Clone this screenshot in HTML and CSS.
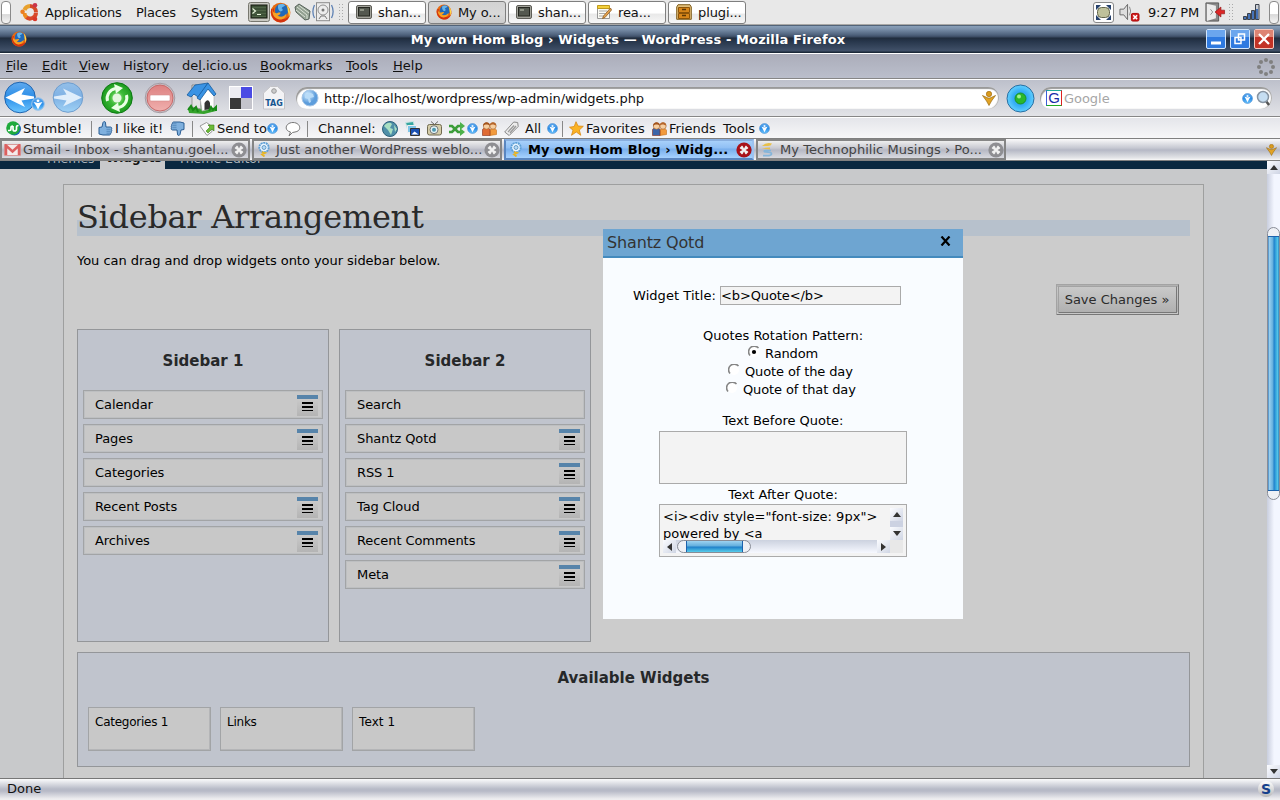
FILE: index.html
```html
<!DOCTYPE html>
<html lang="en">
<head>
<meta charset="utf-8">
<title>My own Hom Blog › Widgets — WordPress</title>
<link rel="stylesheet" href="styles.css">
</head>
<body>
<svg class="defs" width="0" height="0" aria-hidden="true">
  <defs>
    <linearGradient id="gBlue" x1="0" y1="0" x2="0" y2="1"><stop offset="0" stop-color="#5fa9ee"/><stop offset=".5" stop-color="#2b8ee8"/><stop offset="1" stop-color="#6cc6ff"/></linearGradient>
    <linearGradient id="gPale" x1="0" y1="0" x2="0" y2="1"><stop offset="0" stop-color="#93bfe9"/><stop offset=".5" stop-color="#7fb1e4"/><stop offset="1" stop-color="#9fd2f6"/></linearGradient>
    <radialGradient id="gGreen"><stop offset="0" stop-color="#b6efa6"/><stop offset=".45" stop-color="#3dbb38"/><stop offset="1" stop-color="#1c9a1e"/></radialGradient>
    <linearGradient id="gRed" x1="0" y1="0" x2="0" y2="1"><stop offset="0" stop-color="#dd8080"/><stop offset="1" stop-color="#f0b0ae"/></linearGradient>
    <radialGradient id="gCyan"><stop offset="0" stop-color="#2aa0ee"/><stop offset=".55" stop-color="#35aef6"/><stop offset="1" stop-color="#62d0ff"/></radialGradient>
    <radialGradient id="gGlobe" cx=".35" cy=".3"><stop offset="0" stop-color="#d9efff"/><stop offset="1" stop-color="#5d9ddc"/></radialGradient>
    <linearGradient id="gSilver" x1="0" y1="0" x2="0" y2="1"><stop offset="0" stop-color="#fdfdfd"/><stop offset="1" stop-color="#b9b9b9"/></linearGradient>

    <symbol id="firefox" viewBox="0 0 20 20">
      <circle cx="10" cy="10" r="9.4" fill="#e66a10"/>
      <path d="M1 7C0 13 4 19.5 10 19.5c5 0 9-4 9.400-9C18 15 14 17 10 16 5 15 3 11 4 6z" fill="#d3330f"/>
      <circle cx="11" cy="8" r="6.300" fill="#2269b8"/>
      <path d="M8 2.500c2-1 5-1 6.500.5C13 5 12 4 11 6c2 1 1 3-1 3-2-1-3-4-2-6.500z" fill="#67b5ea"/>
      <path d="M3 4C2 8 3 10 5 10.500c2 .5 3-1 5-.5 0 2-2 3-3 3 3 2 7 1 8.500-2C16 15 12 17.500 8 16.500 3 15 1 10 3 4z" fill="#f7a323"/>
      <path d="M16 3c3 3 4 8 2 12 0-3-.5-5-1-6 0-2-.5-4-1-6z" fill="#ffd94a"/>
    </symbol>
    <symbol id="terminal" viewBox="0 0 22 20">
      <rect x=".5" y=".5" width="21" height="19" rx="2" fill="#c9c9c2" stroke="#77776f"/>
      <rect x="3" y="3" width="16" height="13" fill="#3c5036" stroke="#15190f"/>
      <path d="M4 5.500h14M4 8.500h14M4 11.500h14M4 14.500h14" stroke="#4f6447"/>
      <path d="M4.500 6.500L7.500 9l-3 2.500M9 12.500h4" stroke="#e9f5dd" fill="none" stroke-width="1.200"/>
    </symbol>
    <symbol id="monitor" viewBox="0 0 16 14">
      <rect x=".5" y=".5" width="15" height="13" rx="1.500" fill="#a3a39b" stroke="#5e5e58"/>
      <rect x="2.500" y="2.500" width="11" height="8.500" fill="#54584f" stroke="#24261f"/>
      <path d="M4 5h4" stroke="#c8cdbd"/>
    </symbol>
    <symbol id="drop" viewBox="0 0 12 12">
      <circle cx="6" cy="6" r="5.400" fill="url(#gBlue)" stroke="#4c8fd2" stroke-width=".7"/>
      <path d="M6 10.200L4.300 6.800 2.800 4.200 6 5l3.200-.8-1.500 2.600z" fill="#fff"/><circle cx="6" cy="3.300" r="1.200" fill="#e6f4ff"/>
    </symbol>
    <symbol id="people" viewBox="0 0 15 15">
      <path d="M8 14.500V9.500c0-2.500 6.500-2.500 6.500 0v4z" fill="#f29a3c" stroke="#c56d18" stroke-width=".6"/>
      <path d="M.5 14.500V9c0-3 7.500-3 7.500 0v5.500z" fill="currentColor" stroke="#8b2d15" stroke-width=".6"/>
      <circle cx="11" cy="5" r="3.200" fill="#f6cfa2" stroke="#a05a22" stroke-width=".6"/>
      <path d="M7.800 4.500C8 0 14 0 14.300 4.500 12 4 11 2.500 7.800 4.500z" fill="#b5662a"/>
      <circle cx="4.500" cy="5" r="3.200" fill="#f6cfa2" stroke="#a05a22" stroke-width=".6"/>
      <path d="M1 5C1 .5 7.500 0 8 4.500 6 4 4 2.500 1 5z" fill="#a3541f"/>
    </symbol>
    <symbol id="closer" viewBox="0 0 16 16">
      <circle cx="8" cy="8" r="7.600" fill="currentColor"/>
      <path d="M4.800 4.800l6.400 6.400M11.200 4.800l-6.400 6.400" stroke="#f1f1f1" stroke-width="3.400"/>
      <path d="M8 3.500v9M3.500 8h9" stroke="currentColor" stroke-width="1"/>
      <circle cx="8" cy="8" r="2" fill="#f1f1f1"/>
    </symbol>
    <symbol id="kite" viewBox="0 0 14 15">
      <circle cx="7" cy="3" r="2.700" fill="#d99a1c" stroke="#99640a" stroke-width=".6"/>
      <path d="M.5 4.500L6 7h2l5.500-2.500L9.500 10 7 14.500 4.500 10z" fill="#e2a325" stroke="#996b12" stroke-width=".7"/>
    </symbol>
    <symbol id="bulb" viewBox="0 0 13 15">
      <circle cx="7" cy="5.500" r="4.700" fill="#eaf5ff" stroke="#5c9fd6" stroke-width="1.800" stroke-dasharray="2 .6"/>
      <circle cx="7" cy="5.500" r="2" fill="#b5daf5" stroke="#427fb5" stroke-width=".7"/>
      <path d="M5 10l3 1-3 1.500 2.500 2" stroke="#e8b526" stroke-width="1.800" fill="none"/>
    </symbol>
    <symbol id="thumb" viewBox="0 0 15 15">
      <path d="M1 6.500L4 6 5 1.500C5.500.300 7.500 0 7.500 2L8 6h4.500c1.500.2 1.500 1.800.8 2.200.8.700.6 1.800 0 2 .4.900 0 1.700-.6 1.900.2 1-.5 1.900-1.400 1.900H5l-4-1z" fill="#7fb0de" stroke="#2b5e94"/>
      <path d="M8.500 8.300h4M8.500 10.300h4M8.500 12.200h3.500" stroke="#3f74a8" stroke-width=".6"/>
    </symbol>
  </defs>
</svg>

<div class="screen">
  <header class="panel">
    <span class="panel-grip"></span>
    <svg class="ubuntu" viewBox="0 0 20 20"><g fill="none" stroke-width="4"><path d="M4.500 8A6 6 0 0 1 10 4" stroke="#e8a12e"/><path d="M10 4A6.200 6.200 0 0 1 16 10" stroke="#d64a27"/><path d="M16 10.500A6 6 0 0 1 6 15" stroke="#d8482a"/><path d="M6.500 15.500A6 6 0 0 1 4.500 11" stroke="#ee8b20"/></g><circle cx="2.600" cy="9.800" r="2.300" fill="#ea7d24"/><circle cx="15" cy="3.200" r="2.300" fill="#c9344a"/><circle cx="15" cy="17" r="2.300" fill="#d93629"/></svg>
    <span>Applications</span><span>Places</span><span>System</span>
    <svg class="i22" viewBox="0 0 22 20"><use href="#terminal"/></svg>
    <svg class="i21" viewBox="0 0 20 20"><use href="#firefox"/></svg>
    <svg class="i18" viewBox="0 0 18 18"><path d="M1 4l4-3 11 7-1 8-4 1L2 9z" fill="#93a192" stroke="#56625a"/><path d="M3 4l10 8v4M5 2.500l10 7.500M2 7l9 7" stroke="#dce3d8" fill="none"/></svg>
    <svg class="i22" viewBox="0 0 22 20"><rect x="4.500" y=".7" width="13" height="18" fill="#ececec" stroke="#8c8c8c"/><circle cx="11" cy="8" r="5" fill="none" stroke="#909090"/><circle cx="11" cy="8" r="1.500" fill="#777"/><path d="M7 17l2-3h4l2 3" stroke="#777" fill="none"/><path d="M2.500 3c-2 4-2 9 0 13M19.500 3c2 4 2 9 0 13" stroke="#5f82b4" fill="none" stroke-width="1.300"/></svg>
    <span class="dots"></span>
    <div class="tasks">
      <div class="task"><svg class="i16" viewBox="0 0 16 14"><use href="#monitor"/></svg><span>shan...</span></div>
      <div class="task active"><svg class="i16" viewBox="0 0 20 20"><use href="#firefox"/></svg><span>My o...</span></div>
      <div class="task"><svg class="i16" viewBox="0 0 16 14"><use href="#monitor"/></svg><span>shan...</span></div>
      <div class="task"><svg class="i16" viewBox="0 0 16 16"><path d="M1.500 2.500h12v12h-12z" fill="#fafaf4" stroke="#999"/><path d="M1.500 1.500h12v3h-12z" fill="#f3cf3a" stroke="#c09a1c"/><path d="M3 7h8M3 9.500h6M3 12h5" stroke="#aaa"/><path d="M14.500 4l-7 8-1 2.500L9 13.500 15.500 6z" fill="#e6a450" stroke="#8b5a20" stroke-width=".8"/></svg><span>rea...</span></div>
      <div class="task"><svg class="i16" viewBox="0 0 16 16"><path d="M2 .7h12l1.300 2.300v12.300H.7V3z" fill="#e0bd78" stroke="#806020"/><path d="M2.500 3.500h11v5h-11zM2.500 9.500h11v5h-11z" fill="#d7861a" stroke="#8e5508"/><path d="M6 5.500h4M6 11.500h4" stroke="#5d3804" stroke-width="1.400"/></svg><span>plugi...</span></div>
    </div>
    <div class="tray">
      <svg class="i21" viewBox="0 0 21 21"><rect x=".5" y=".5" width="20" height="20" rx="2.500" fill="#fff" stroke="#888"/><path d="M3 3h5L3 8zM18 3h-5l5 5zM3 18h5l-5-5zM18 18h-5l5-5z" fill="#25406b"/><rect x="4.500" y="5.500" width="12" height="10" rx="4" fill="#bfc19a" stroke="#62644b"/></svg>
      <svg class="i22" viewBox="0 0 22 21"><path d="M1.500 7.500h4l4-5v16l-4-5h-4z" fill="#ddd" stroke="#666"/><path d="M11.500 5q2.500 4.500 0 9" fill="none" stroke="#888"/><rect x="13.500" y="12" width="8" height="8" rx="1.500" fill="#cf1d1d" stroke="#a00"/><path d="M15.500 14l4 4M19.500 14l-4 4" stroke="#fff" stroke-width="1.600"/></svg>
      <span>9:27 PM</span>
      <svg class="i22" viewBox="0 0 22 22"><path d="M1 1h14v20H1z" fill="#8a8a8a" stroke="#555"/><path d="M2 2l10 2v14l-10 3z" fill="#ececec"/><path d="M6 8l2.500 3L6 14" fill="none" stroke="#888"/><path d="M21.500 9h-4V5.500L11 11l6.500 5.500V13h4z" fill="#dd2626" stroke="#8f1010" stroke-width=".7"/></svg>
      <span class="dots"></span>
      <svg class="i18" viewBox="0 0 18 18"><g fill="#4673b8" stroke="#3c424c"><path d="M.5 13.500h3v3h-3z"/><path d="M4.500 10.500h3v6h-3z"/><path d="M8.500 7.500h3v9h-3z"/><path d="M12.500 1.500h3.500v15h-3.500z" fill="#c9cdd4"/><path d="M13 6h2v10h-2z" stroke="none"/></g></svg>
      <span class="panel-grip"></span>
    </div>
  </header>

  <div class="titlebar">
    <svg class="i16" viewBox="0 0 20 20"><use href="#firefox"/></svg>
    <b>My own Hom Blog › Widgets — WordPress - Mozilla Firefox</b>
    <svg class="winbtn" viewBox="0 0 20 20"><rect x=".5" y=".5" width="19" height="19" rx="1.500" fill="#2f7ae0" stroke="#d3e6fb"/><path d="M1 1h18v7H1z" fill="#6ba6ee"/><path d="M5 14h10" stroke="#fff" stroke-width="3"/></svg>
    <svg class="winbtn" viewBox="0 0 20 20"><rect x=".5" y=".5" width="19" height="19" rx="1.500" fill="#2f7ae0" stroke="#d3e6fb"/><path d="M1 1h18v7H1z" fill="#6ba6ee"/><path d="M8.500 5h6v6h-6zM5 8.500h6v6H5z" fill="none" stroke="#fff" stroke-width="1.500"/></svg>
    <svg class="winbtn" viewBox="0 0 20 20"><rect x=".5" y=".5" width="19" height="19" rx="1.500" fill="#c23326" stroke="#f6c8be"/><path d="M1 1h18v7H1z" fill="#dd8473"/><path d="M5 5l10 10M15 5L5 15" stroke="#fff" stroke-width="2.300"/></svg>
  </div>

  <nav class="menubar">
    <span><u>F</u>ile</span><span><u>E</u>dit</span><span><u>V</u>iew</span><span>Hi<u>s</u>tory</span><span>de<u>l</u>.icio.us</span><span><u>B</u>ookmarks</span><span><u>T</u>ools</span><span><u>H</u>elp</span>
    <svg class="i18" viewBox="0 0 18 18"><g fill="#808080"><circle cx="9" cy="2" r="2"/><circle cx="14" cy="4" r="2"/><circle cx="16" cy="9" r="2"/><circle cx="14" cy="14" r="2"/><circle cx="9" cy="16" r="2"/><circle cx="4" cy="14" r="2"/><circle cx="2" cy="9" r="2"/><circle cx="4" cy="4" r="2"/></g></svg>
  </nav>

  <div class="navbar">
    <svg width="43" height="34" viewBox="0 0 43 34"><circle cx="17" cy="16.500" r="15.300" fill="url(#gBlue)" stroke="#2065b0"/><path d="M2.500 16.500L22 7l-3.500 6.500L31 15.500v2l-12.500 2L22 26z" fill="#fff"/><circle cx="35" cy="23" r="6.300" fill="url(#gBlue)" stroke="#9cc4ea"/><path d="M35 28.500l-2-4-2.500-3.500 4.500 1 4.500-1-2.500 3.500z" fill="#fff"/><circle cx="35" cy="19.800" r="1.400" fill="#fff"/></svg>
    <svg width="34" height="34" viewBox="0 0 34 34"><circle cx="17" cy="16.500" r="14.800" fill="url(#gPale)" stroke="#6f9ecf"/><path d="M31 16.500L12 7.500l3.500 6L3 15.500v2l12.500 2-3.500 6z" fill="#e0eefb"/></svg>
    <svg width="34" height="34" viewBox="0 0 34 34"><circle cx="17" cy="17" r="15.300" fill="url(#gGreen)" stroke="#0c7a12"/><path d="M7.500 20a10 10 0 0 1 8-12.500M26.500 14a10 10 0 0 1-8 12.500" stroke="#eaffe6" stroke-width="3" fill="none"/><path d="M14 3l9 4-7 5.500zM20 31l-9-4 7-5.500z" fill="#eaffe6"/><circle cx="17" cy="17" r="4.500" fill="#e4f7e0"/></svg>
    <svg width="34" height="34" viewBox="0 0 34 34"><circle cx="17" cy="17" r="14.800" fill="#c9c0c6" stroke="#a49ca4"/><circle cx="17" cy="17" r="13" fill="url(#gRed)" stroke="#c86a6a"/><rect x="7" y="14" width="20" height="6" rx="1" fill="#fff" stroke="#d38c8c" stroke-width=".6"/></svg>
    <svg width="34" height="34" viewBox="0 0 34 34"><path d="M3 27l9-4 16 3 3 4-12 3-15-1z" fill="#35a32c"/><path d="M7 13l8 1 1 14-9-2z" fill="#e2e2e4" stroke="#999"/><path d="M7 4h5v6H7z" fill="#ddd" stroke="#888"/><path d="M2 14L10 4l13-2-7 11-3 3-4-3-3 3z" fill="#3a93e4" stroke="#175a9c" stroke-width=".8"/><path d="M15 16l7-9 7 8v12l-12 3z" fill="#fff" stroke="#aaa" stroke-width=".6"/><path d="M12 17L23 2l8 11-2 2-6-7-8 11z" fill="#3a93e4" stroke="#175a9c" stroke-width=".8"/><path d="M19.500 29v-7q3-5 5.500-.5V28z" fill="#333"/><path d="M3 29l3-4 2 4 3-3 2 5M24 30l2-4 2 3 3-3v4" stroke="#188a18" stroke-width="2" fill="none"/></svg>
    <svg width="24" height="24" viewBox="0 0 24 24"><path d="M0 0h24v24H0z" fill="#fff"/><path d="M1 1h11v11H1z" fill="#ececf2"/><path d="M12 1h11v11H12z" fill="#4a4be4"/><path d="M1 12h11v11H1z" fill="#3a3a3a"/><path d="M12 12h11v11H12z" fill="#c4c4cc"/></svg>
    <svg width="22" height="24" viewBox="0 0 22 24"><path d="M.5 7l7-6.500h7l7 6.500v16H.5z" fill="#f3f3f5" stroke="#c4c4c8"/><circle cx="11" cy="5" r="2.300" fill="#ccc" stroke="#999"/><text x="11" y="20" class="tagtext">TAG</text></svg>
    <div class="url">
      <svg class="i18" viewBox="0 0 18 18"><circle cx="9" cy="9" r="8" fill="url(#gGlobe)" stroke="#a7c6e6"/><path d="M4 6c3-3 6-2 8-1l1 3-4 1 1 4-2 1-1-4-3-1z" fill="#b9dcf8"/></svg>
      <span>http://localhost/wordpress/wp-admin/widgets.php</span>
      <svg width="14" height="15" viewBox="0 0 14 15"><use href="#kite"/></svg>
    </div>
    <svg width="29" height="29" viewBox="0 0 29 29"><circle cx="14.500" cy="14.500" r="13.500" fill="url(#gCyan)" stroke="#276ea2"/><circle cx="14.500" cy="14.500" r="5.500" fill="#2ab82c" stroke="#17902c"/><circle cx="13" cy="12.500" r="2" fill="#9ff08f"/></svg>
    <div class="url search">
      <span class="google-g">G</span>
      <span class="hint">Google</span>
      <svg width="11" height="11" viewBox="0 0 12 12"><use href="#drop"/></svg>
      <svg width="15" height="17" viewBox="0 0 15 17"><path d="M10 11l3 4" stroke="#555" stroke-width="2.500"/><circle cx="7" cy="7" r="5.500" fill="#c6def2" stroke="#8794a2" stroke-width="1.500"/></svg>
    </div>
  </div>

  <div class="stumble">
    <svg class="i15" viewBox="0 0 15 15"><circle cx="8.500" cy="8" r="6.500" fill="#1a64b8"/><circle cx="7" cy="7" r="6.800" fill="#1faa3c"/><path d="M2 9.500h1.500q1.500 0 1.500-1.500V6.500q0-1.500 2-1.500M7 5v3q0 2 1.700 2T10.500 8V6q0-1.500 2-1.500" stroke="#fff" stroke-width="1.700" fill="none"/></svg>
    <span>Stumble!</span><i class="sep"></i>
    <svg class="i15" viewBox="0 0 15 15"><use href="#thumb"/></svg>
    <span>I like it!</span>
    <svg class="i15" viewBox="0 0 15 15"><use href="#thumb" transform="rotate(180 7.500 7.500)"/></svg>
    <i class="sep"></i>
    <svg class="i16" viewBox="0 0 16 15"><path d="M1 4.500L7.500 1 13 5v5l-5 4z" fill="#fafafa" stroke="#999"/><path d="M7 9.500L11 5.500 9 3.500h6v6l-2-2-4 4z" fill="#6cbb37" stroke="#3c7d18" stroke-width=".6"/></svg>
    <span>Send to</span>
    <svg class="i11" viewBox="0 0 12 12"><use href="#drop"/></svg>
    <svg class="i16" viewBox="0 0 16 15"><path d="M4 14.500l1.500-4C-1.500 9 .5 1 8 1s9.500 8.500 2 9.500L7.500 11z" fill="#fff" stroke="#777"/></svg>
    <i class="sep"></i>
    <span>Channel:</span>
    <svg class="i16" viewBox="0 0 16 16"><circle cx="8" cy="8" r="7.500" fill="#4f8fa8" stroke="#2b617a"/><path d="M2 5c3-4 6-4 8-2L8 7l3 1-2 6-3-5z" fill="#a8dfc2"/><path d="M12 4l3 4-2 3z" fill="#a8dfc2"/></svg>
    <svg class="i15" viewBox="0 0 15 15"><path d="M.5 1.500l8-1 1 6-7 2z" fill="#36a6a0" stroke="#cfe7e6"/><path d="M2.500 4.500h9v7h-9z" fill="#7ec5e8" stroke="#eee"/><path d="M5.500 7.500h9v7h-9z" fill="#1950b4" stroke="#333"/><path d="M6.500 13.500l3-3 4 3z" fill="#fff"/></svg>
    <svg class="i15" viewBox="0 0 15 15"><path d="M4 .5l3.500 3 3.500-3" stroke="#666" fill="none"/><rect x=".5" y="3.500" width="14" height="10.500" rx="2" fill="#d5cda9" stroke="#706a50"/><circle cx="7" cy="8.700" r="4" fill="#e4f3f4" stroke="#777"/><circle cx="7" cy="8.700" r="2" fill="#4e98b0"/></svg>
    <svg class="i16" viewBox="0 0 16 14"><path d="M0 4h3l6 6h3M0 10h3l6-6h3" stroke="#3c9d3a" stroke-width="2.700" fill="none"/><path d="M11 0l5 4-5 4zM11 6l5 4-5 4z" fill="#4db14a"/></svg>
    <svg class="i11" viewBox="0 0 12 12"><use href="#drop"/></svg>
    <svg class="i15 orange" viewBox="0 0 15 15"><use href="#people"/></svg>
    <svg class="i15" viewBox="0 0 15 15"><path d="M.7 11l9-10 4 .5.5 4-9 9z" fill="#ececec" stroke="#8a8a8a"/><path d="M4 11l6-6.500M6 12l6-7" stroke="#9a9a9a" stroke-width="1.300"/></svg>
    <span>All</span>
    <svg class="i11" viewBox="0 0 12 12"><use href="#drop"/></svg>
    <i class="sep"></i>
    <svg class="i15" viewBox="0 0 15 15"><path d="M7 .7l2 4.300 5.300.3-4 3.700 1.500 5.300L7.300 11 2.500 14.300 4 9.200.5 6.200l4.700-.7z" fill="#fbb324" stroke="#d98914" stroke-width=".8"/></svg>
    <span>Favorites</span>
    <svg class="i15 blue" viewBox="0 0 15 15"><use href="#people"/></svg>
    <span>Friends</span><span>Tools</span>
    <svg class="i11" viewBox="0 0 12 12"><use href="#drop"/></svg>
  </div>

  <div class="tabs">
    <div class="tab"><svg width="17" height="12" viewBox="0 0 17 12"><path d="M.5.500h16v11H.5z" fill="#f4eaea" stroke="#d99a9a"/><path d="M2 11V1.500l6.500 6 6.500-6V11" fill="none" stroke="#dc5f5f" stroke-width="2.500"/></svg><span>Gmail - Inbox - shantanu.goel...</span><svg class="i16 gray" viewBox="0 0 16 16"><use href="#closer"/></svg></div>
    <div class="tab"><svg width="13" height="15" viewBox="0 0 13 15"><use href="#bulb"/></svg><span>Just another WordPress weblo...</span><svg class="i16 gray" viewBox="0 0 16 16"><use href="#closer"/></svg></div>
    <div class="tab current"><svg width="13" height="15" viewBox="0 0 13 15"><use href="#bulb"/></svg><span>My own Hom Blog › Widg...</span><svg class="i16 darkred" viewBox="0 0 16 16"><use href="#closer"/></svg></div>
    <div class="tab"><svg width="13" height="15" viewBox="0 0 13 15"><path d="M1 4q4-4 10-2.500-1 2.500-4 2.500zM1 6.500q4-1 8-1v2z" fill="#e8c04a"/><path d="M10 8.500H4.500q-2 0-1 1.200l5.500.8q2.500.8 1 2.300L8 13.700H2" fill="none" stroke="#85b5da" stroke-width="1.700"/></svg><span>My Technophilic Musings › Po...</span><svg class="i16 gray" viewBox="0 0 16 16"><use href="#closer"/></svg></div>
    <svg class="tabkite" width="11" height="12" viewBox="0 0 14 15"><use href="#kite"/></svg>
  </div>

  <div class="viewport">
    <main class="page">
      <div class="submenu"><span>Themes</span><b>Widgets</b><span>Theme Editor</span></div>
      <section class="wrap">
        <h2>Sidebar Arrangement</h2>
        <p>You can drag and drop widgets onto your sidebar below.</p>
        <div class="submit"><button>Save Changes »</button></div>
        <div class="zones">
          <div class="zone">
            <h3>Sidebar 1</h3>
            <div class="widget"><span>Calendar</span><i class="opt"></i></div>
            <div class="widget"><span>Pages</span><i class="opt"></i></div>
            <div class="widget"><span>Categories</span></div>
            <div class="widget"><span>Recent Posts</span><i class="opt"></i></div>
            <div class="widget"><span>Archives</span><i class="opt"></i></div>
          </div>
          <div class="zone">
            <h3>Sidebar 2</h3>
            <div class="widget"><span>Search</span></div>
            <div class="widget"><span>Shantz Qotd</span><i class="opt"></i></div>
            <div class="widget"><span>RSS 1</span><i class="opt"></i></div>
            <div class="widget"><span>Tag Cloud</span><i class="opt"></i></div>
            <div class="widget"><span>Recent Comments</span><i class="opt"></i></div>
            <div class="widget"><span>Meta</span><i class="opt"></i></div>
          </div>
        </div>
        <div class="available">
          <h3>Available Widgets</h3>
          <div class="palette"><span>Categories 1</span><span>Links</span><span>Text 1</span></div>
        </div>
      </section>
    </main>
    <div class="vscroll"><i class="arrow up"></i><div class="vthumb"></div><i class="arrow down"></i></div>

    <div class="dialog">
      <div class="dlg-head"><span>Shantz Qotd</span><svg width="11" height="10" viewBox="0 0 11 10"><path d="M1.500.5l8 9M9.500.5l-8 9" stroke="#000" stroke-width="2.200"/></svg></div>
      <div class="dlg-body">
        <div class="title-row"><span>Widget Title:</span><div class="field">&lt;b&gt;Quote&lt;/b&gt;</div></div>
        <div class="line">Quotes Rotation Pattern:</div>
        <div class="line radio r1"><svg width="12" height="12" viewBox="0 0 12 12"><circle cx="6" cy="6" r="5" fill="#fff"/><path d="M2 9.500A5.200 5.200 0 0 1 10.500 2" fill="none" stroke="#858585" stroke-width="1.600"/><circle cx="6" cy="6" r="2.100"/></svg><span>Random</span></div>
        <div class="line radio r2"><svg width="12" height="12" viewBox="0 0 12 12"><circle cx="6" cy="6" r="5" fill="#fff"/><path d="M2 9.500A5.200 5.200 0 0 1 10.500 2" fill="none" stroke="#858585" stroke-width="1.600"/></svg><span>Quote of the day</span></div>
        <div class="line radio r3"><svg width="12" height="12" viewBox="0 0 12 12"><circle cx="6" cy="6" r="5" fill="#fff"/><path d="M2 9.500A5.200 5.200 0 0 1 10.500 2" fill="none" stroke="#858585" stroke-width="1.600"/></svg><span>Quote of that day</span></div>
        <div class="line before">Text Before Quote:</div>
        <div class="area"></div>
        <div class="line after">Text After Quote:</div>
        <div class="area filled">
          <div class="area-text">&lt;i&gt;&lt;div style="font-size: 9px"&gt;<br>powered by &lt;a</div>
          <div class="mini-v"><i class="arrow up"></i><i class="arrow down"></i></div>
          <div class="mini-h"><i class="arrow left"></i><div class="hthumb"></div><i class="arrow right"></i></div>
          <div class="corner"></div>
        </div>
      </div>
    </div>
  </div>

  <footer class="status"><span>Done</span><svg class="i18" viewBox="0 0 18 18"><circle cx="9" cy="9" r="8" fill="url(#gSilver)"/><text x="9" y="14" class="stext">S</text></svg></footer>
</div>
</body>
</html>
```
FILE: styles.css
```css
* { box-sizing: border-box; }
body { margin: 0; overflow: hidden; font: 13px "DejaVu Sans", sans-serif; color: #111; }
.defs { position: absolute; }
svg { display: block; }
span, b { white-space: nowrap; }
.screen { width: 1280px; height: 800px; display: flex; flex-direction: column; overflow: hidden; }
.i11 { width: 11px; height: 11px; }
.i15 { width: 15px; height: 15px; }
.i16 { width: 16px; height: 16px; }
.i18 { width: 18px; height: 18px; }
.i21 { width: 21px; height: 21px; }
.i22 { width: 22px; height: 20px; }

/* Desktop panel */
.panel { height: 25px; padding-left: 1px; background: #e8e8e8; border-bottom: 1px solid #a9a8a6; display: grid; align-items: center;
  grid-template-columns: 19px 25px 91px 55px 57px 22px 24px 18px 26px 10px 700px 1fr; }
.panel > span { letter-spacing: -.24px; }
.panel-grip { width: 10px; height: 23px; border: 1px solid #8a8a8a; border-radius: 4px; background: linear-gradient(#fff 55%, #d9d9d9 60%, #f4f4f4); }
.ubuntu { width: 20px; height: 20px; }
.dots { width: 6px; height: 18px; background: radial-gradient(circle, #aaa 1px, transparent 1px) 0 0 / 3px 3px; }
.tasks { display: flex; gap: 2px; }
.task { width: 78px; height: 23px; padding-left: 7px; display: flex; align-items: center; gap: 6px; border: 1px solid #7f7f7f; border-radius: 3px; background: linear-gradient(#fff 52%, #e9e9e9 58%, #f7f7f7); letter-spacing: -.1px; }
.task.active { background: linear-gradient(#d2d2d2, #d8d8d8 55%, #cdcdcd); }
.task.active span { padding-top: 1px; }
.tray { display: grid; align-items: center; grid-template-columns: 25px 30px 56px 24px 15px 26px 10px; margin-left: 45px; letter-spacing: -.2px; }

/* Window title */
.titlebar { height: 29px; border-bottom: 1px solid #fff; display: grid; align-items: center; padding-left: 11px;
  grid-template-columns: 28px 1fr 24px 24px 26px;
  background: linear-gradient(#1a2737 0, #8aa0b9 1px, #7b90aa 4px, #4e617b 10px, #3a4a61 12px, #202c3c 13px, #26354a 16px, #415169 26px, #1b2939 27px, #1b2939 28px); }
.titlebar b { color: #fff; text-align: center; padding-right: 2px; margin-left: 13px; letter-spacing: .11px; }
.winbtn { width: 20px; height: 20px; }

/* Menu */
.menubar { height: 26px; padding-left: 6px; border-bottom: 1px solid #fff; box-shadow: inset 0 -1px #868686; display: grid; align-items: center;
  grid-template-columns: 36px 37px 44px 59px 78px 86px 47px 864px 1fr; background: linear-gradient(#abadba, #bbbfcc); }
.menubar span { margin-top: -2px; }

/* Navigation */
.navbar { height: 38px; padding: 0 0 1px 3px; border-bottom: 1px solid #fff; box-shadow: inset 0 -1px #868686; display: grid; align-items: center;
  grid-template-columns: 48px 49px 43px 42px 44px 34px 33px 710px 34px 232px; background: linear-gradient(#bdc0cb, #e3e4e8); }
.tagtext { font: bold 8px "DejaVu Sans"; fill: #17568f; text-anchor: middle; }
.url { height: 22px; width: 703px; padding-left: 5px; border-radius: 11px; background: #fff; box-shadow: inset 1px 2px 1px #999, inset -1px 0 1px #aaa; display: grid; align-items: center; grid-template-columns: 23px 658px 14px; letter-spacing: -.04px; }
.url.search { width: 232px; grid-template-columns: 18px 178px 14px 15px; padding-left: 6px; }
.google-g { width: 16px; height: 16px; border: 1px solid #3b5ed8; border-right-color: #d22; border-bottom-color: #2a2; border-top-color: #2a9; font: 15px/14px "Liberation Sans"; text-align: center; color: #1a2ca8; background: #fff; }
.hint { color: #a6a6a6; }

/* Stumble toolbar */
.stumble { height: 21px; padding-left: 6px; padding-right: 0; box-shadow: inset 0 -1px #808080; background: linear-gradient(#e4e5ea, #f8f8f9); display: grid; align-items: center;
  grid-template-columns: 17px 68px 7px 17px 55px 22px 7px 18px 50px 18px 22px 11px 64px 23px 22px 22px 18px 15px 22px 21px 22px 15px 7px 17px 66px 17px 54px 36px 11px; }
.sep { width: 1px; height: 16px; background: #888; }
.orange { color: #e06b34; }
.blue { color: #3b64a8; }

/* Tabs */
.tabs { height: 22px; display: flex; gap: 2px; border-bottom: 1px solid #808080; background: linear-gradient(#fafafa, #c6c8d2 9px, #b5b8c5 11px, #e4e5e8 19px, #f8f8f8); }
.tab { width: 250px; height: 21px; padding-left: 3px; display: grid; align-items: center; grid-template-columns: 19px 208px 16px; border: 2px solid #858585; color: #444; letter-spacing: .03px; background: linear-gradient(#eee, #c9cad2 7px, #b6b8c4 9px, #d9dae0); }
.tab:first-child { padding-left: 2px; }
.tab.current { border-color: #88aede #9ec2f0 #5a86c0 #5a86c0; color: #000; font-weight: bold; letter-spacing: .1px; background: linear-gradient(#a8d0fa, #8fbff4 7px, #78aeec 8px, #a6d2ff); }
.gray { color: #8e8e92; }
.darkred { color: #a81119; }
.tabkite { margin: 5px 3px 0 auto; }

/* Page */
.viewport { flex: 1; display: flex; position: relative; overflow: hidden; min-height: 0; }
.page { flex: 1; background: #c8c9cb; padding: 0 63px; }
.submenu { height: 8px; margin: 0 -63px 15px; padding-left: 45px; background: #0a2840; display: flex; color: #a9b4bd; overflow: hidden; line-height: 15px; }
.submenu span, .submenu b { margin-top: -10px; height: 22px; }
.submenu span { font-size: 12.500px; }
.submenu span:first-child { width: 55px; }
.submenu b { width: 65px; padding: 0 6px; background: #c8c9cb; color: #111; font-size: 12px; margin-right: 13px; }
.wrap { border: 1px solid #9e9f9f; border-bottom: 0; background: #ccc; height: 600px; padding: 0 13px; letter-spacing: -.04px; }
.wrap h2 { margin: 11px 0 0; height: 40px; padding-top: 1px; font: 32px/40px "DejaVu Serif", serif; letter-spacing: -.3px; color: #2a2a2a; background: linear-gradient(#b7c1cc, #b7c1cc) 0 24px / 100% 16px no-repeat; }
.wrap p { margin: 17px 0 0; height: 15px; line-height: 15px; color: #000; }
.submit { height: 31px; margin: 16px 11px 14px; display: flex; justify-content: flex-end; }
.submit button { width: 123px; height: 31px; padding: 0 1px 0 0; border: 3px double #777; border-top-color: #a3a3a3; border-left-color: #a3a3a3; background: linear-gradient(#c9c9c9, #b0b0b0); font: 13px "DejaVu Sans", sans-serif; color: #2b2b2b; }
.zones { display: flex; gap: 10px; }
.zone { width: 252px; height: 313px; padding: 0 5px; border: 1px solid #949699; background: #c0c4cd; display: flex; flex-direction: column; gap: 5px; }
h3 { margin: 0; text-align: center; font: bold 15px/20px "DejaVu Sans", sans-serif; letter-spacing: 0; color: #262829; }
.zone h3 { margin: 21px 0 14px; }
.widget { height: 29px; flex: none; padding: 0 4px 0 11px; display: flex; align-items: center; justify-content: space-between; border: 1px solid #a2a4a6; box-shadow: inset 0 0 0 1px #bdbfc1; background: #c8c8c8; color: #000; letter-spacing: -.08px; }
.opt { width: 21px; height: 21px; margin-top: 2px; border-top: 4px solid #5784aa; background: linear-gradient(#000, #000) 5px 3px / 11px 2px no-repeat, linear-gradient(#000, #000) 5px 7px / 11px 2px no-repeat, linear-gradient(#000, #000) 5px 11px / 11px 1px no-repeat, linear-gradient(#c9c9c9, #b4b4b4); }
.available { height: 115px; margin-top: 10px; padding: 15px 10px 0; border: 1px solid #949699; background: #c0c4cd; }
.palette { margin-top: 19px; display: flex; gap: 9px; }
.palette span { width: 123px; height: 44px; padding: 7px 6px 5px; border: 1px solid #a2a4a6; box-shadow: inset -1px -1px #b4b5b7; background: #c8c8c8; font-size: 12px; letter-spacing: -.25px; line-height: 15px; color: #000; }
.palette span:last-child { letter-spacing: .1px; }

/* Scrollbars */
.vscroll { width: 13px; display: flex; flex-direction: column; background: linear-gradient(90deg, #c9cede, #f3f6ff 55%); }
.arrow { flex: none; width: 13px; height: 13px; background: linear-gradient(135deg, #fbfcff, #cfd5e4); display: flex; align-items: center; justify-content: center; }
.arrow::after { content: ""; border: 4px solid transparent; }
.up::after { border-top: 0; border-bottom: 5px solid #333; }
.down::after { border-bottom: 0; border-top: 5px solid #333; }
.left::after { border-left: 0; border-right: 5px solid #333; }
.right::after { border-right: 0; border-left: 5px solid #333; }
.vthumb { height: 273px; margin: 53px 0 auto; border: 1px solid #888c96; border-radius: 7px; background: linear-gradient(#1b62ad, #1b62ad) 0 8px / 100% 1px no-repeat, linear-gradient(#1b62ad, #1b62ad) 0 262px / 100% 1px no-repeat, linear-gradient(90deg, #1e66b0 0, #9ed2f0 1px, #62aedd 5px, #1f7fc9 6px, #2d96d8 7px, #58cdea 10px, #1e66b0 11px) 0 8px / 100% 255px no-repeat, #eef0f5; }

/* Dialog */
.dialog { position: absolute; left: 603px; top: 68px; width: 360px; height: 390px; background: #f9fcff; color: #000; }
.dlg-head { height: 29px; padding: 0 12px 3px 4px; display: flex; align-items: center; justify-content: space-between; background: #6ea5d1; border-bottom: 2px solid #448abd; font-size: 16px; letter-spacing: -.15px; color: #333; }
.dlg-head span { padding-top: 3px; }
.dlg-body { padding-top: 28px; text-align: center; }
.title-row { display: grid; grid-template-columns: 87px 181px; padding-left: 30px; height: 19px; line-height: 19px; text-align: left; margin-bottom: 22px; }
.title-row span { letter-spacing: .06px; }
.field { height: 19px; padding-left: 0; border: 1px solid #aaa; background: #f3f3f3; line-height: 17px; letter-spacing: -.1px; }
.line { height: 18px; line-height: 18px; }
.radio { display: flex; letter-spacing: -.12px; }
.radio svg { margin: 1px 5px 0 0; }
.r1 { padding-left: 145px; }
.r2 { padding-left: 125px; }
.r3 { padding-left: 123px; }
.before { margin-top: 13px; }
.area { width: 248px; height: 53px; margin: 1px auto 0; border: 1px solid #aaa; background: #f3f3f3; }
.after { margin-top: 2px; }
.area.filled { margin-top: 0; padding: 3px; display: grid; grid-template-columns: 227px 13px; grid-template-rows: 32px 13px; text-align: left; }
.area-text { line-height: 17px; overflow: hidden; white-space: nowrap; letter-spacing: .03px; }
.mini-v { display: flex; flex-direction: column; justify-content: space-between; background: #ccd2e2; }
.mini-h { display: flex; background: linear-gradient(#ccd2df, #f6f8ff); }
.hthumb { width: 74px; height: 13px; margin: 0 auto 0 1px; border: 1px solid #888c96; border-radius: 7px; background: linear-gradient(#9ed2f0, #62aedd 5px, #1f7fc9 6px, #58cdea 11px) 9px 0 / 55px 100% no-repeat, linear-gradient(#1b62ad, #1b62ad) 8px 0 / 57px 100% no-repeat, #eef0f5; }
.corner { background: #e8e8e8; }

.status { height: 22px; padding: 0 5px 2px 7px; display: flex; align-items: center; justify-content: space-between; border-top: 1px solid #777; background: linear-gradient(#fbfbfc, #b7bac7 10px, #b7bac7 12px, #eeeef0 20px); }
.stext { font: bold 14px "DejaVu Sans"; fill: #15408c; text-anchor: middle; }
```
